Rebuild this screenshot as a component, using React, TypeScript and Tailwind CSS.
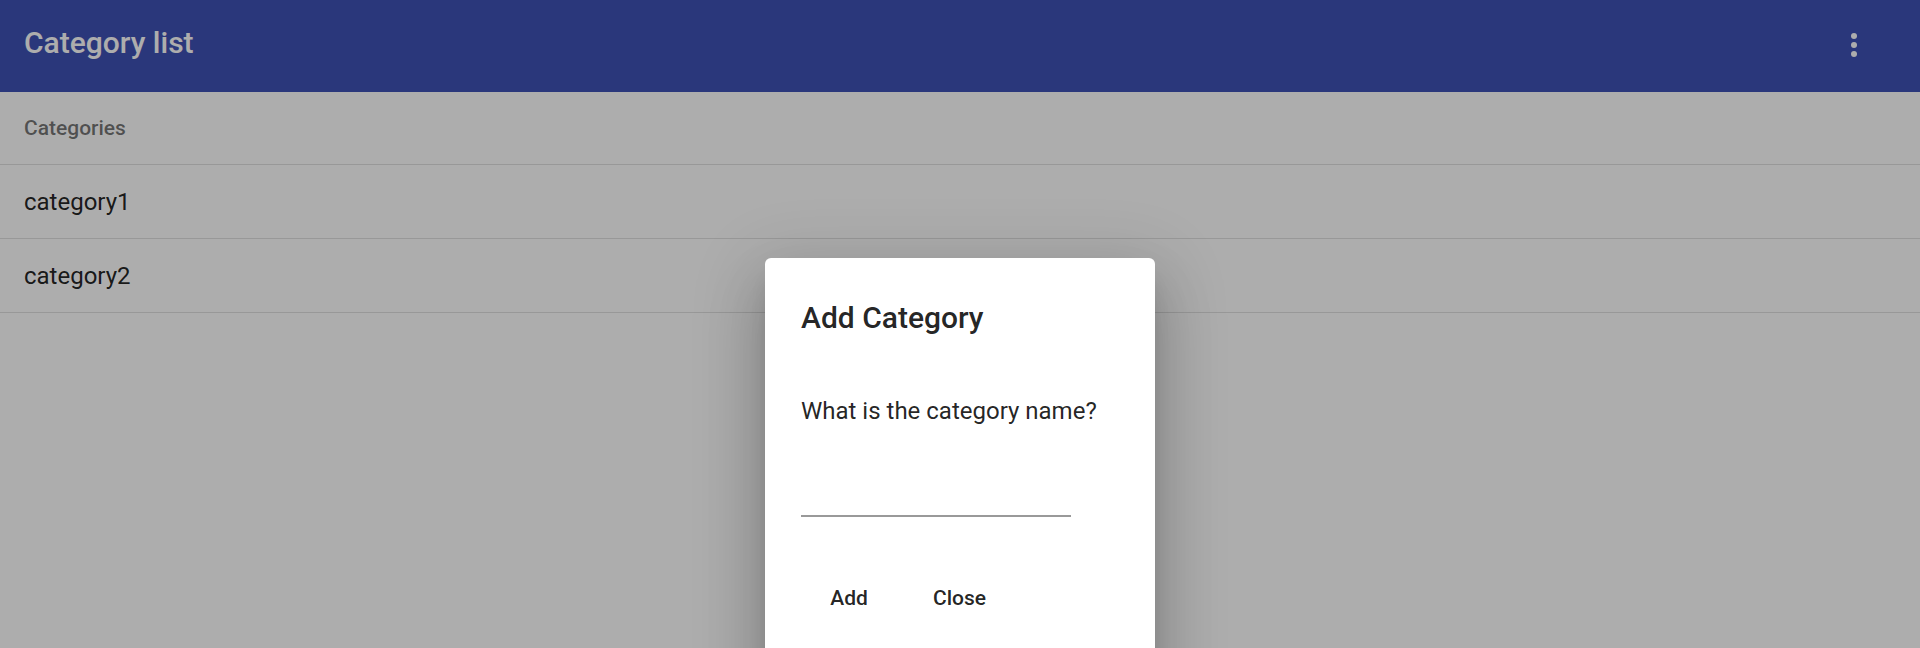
import React from 'react';

const categories = ['category1', 'category2'];

function MoreVert() {
  return (
    <svg viewBox="0 0 24 24" className="h-9 w-9" fill="currentColor">
      <circle cx="12" cy="6" r="2" />
      <circle cx="12" cy="12" r="2" />
      <circle cx="12" cy="18" r="2" />
    </svg>
  );
}

export default function App() {
  return (
    <div className="relative h-[648px] w-full overflow-hidden bg-white font-['Roboto',sans-serif]">
      <header className="flex h-[92px] items-start justify-between bg-[#3f51b5] pl-[24px] pr-[48px] text-white">
        <h1 className="pt-[25px] text-[30px] font-medium leading-[36px]">Category list</h1>
        <button className="mt-[27px] text-white">
          <MoreVert />
        </button>
      </header>

      <ul>
        <li className="h-[73px] border-b border-[#e0e0e0] pl-[24px] text-[21px] font-medium leading-[72px] text-black/55">
          Categories
        </li>
        {categories.map((c) => (
          <li
            key={c}
            className="h-[74px] border-b border-[#e0e0e0] pl-[24px] pt-px text-[24px] leading-[73px] text-black/87"
          >
            {c}
          </li>
        ))}
      </ul>

      {/* backdrop */}
      <div className="absolute inset-0 bg-black/32" />

      {/* dialog */}
      <div className="absolute left-[765px] top-[258px] h-[440px] w-[390px] rounded-[6px] bg-white px-[36px] pt-[37px] shadow-[0_16px_22px_-10px_rgba(0,0,0,0.2),0_36px_57px_5px_rgba(0,0,0,0.14),0_14px_69px_12px_rgba(0,0,0,0.12)]">
        <h2 className="text-[30px] font-medium leading-[46px] text-black/87">Add Category</h2>
        <p className="mt-[52px] text-[24px] leading-[36px] text-black/87">What is the category name?</p>
        <input
          type="text"
          className="mt-[61px] block h-[27px] w-[270px] border-b-2 border-black/40 bg-transparent text-[24px] outline-none"
        />
        <div className="mt-[54px] flex gap-[12px]">
          <button className="h-[54px] min-w-[96px] px-[24px] text-[21px] font-medium leading-[54px] text-black/87">
            Add
          </button>
          <button className="h-[54px] min-w-[96px] px-[24px] text-[21px] font-medium leading-[54px] text-black/87">
            Close
          </button>
        </div>
      </div>
    </div>
  );
}
